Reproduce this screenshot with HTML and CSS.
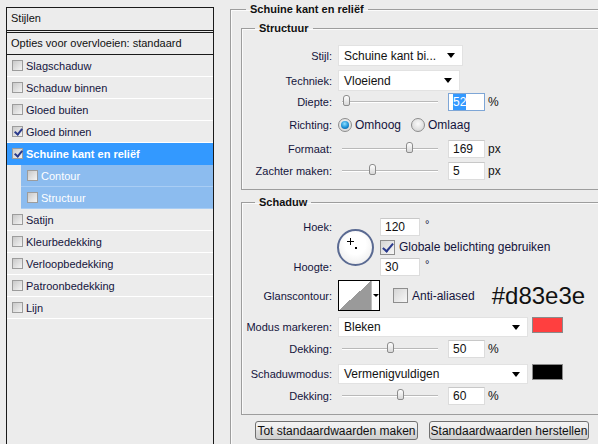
FILE: index.html
```html
<!DOCTYPE html>
<html>
<head>
    <meta charset="utf-8" />
    <title>Laagstijl</title>
    <link rel="stylesheet" href="styles.css">
</head>
<body>
    <div class="dialog">
        <div class="styles-panel">
            <div class="panel-title">Stijlen</div>
            <div class="panel-head">Opties voor overvloeien: standaard</div>
            <ul class="effect-list">
                <li><span class="cb"></span>Slagschaduw</li>
                <li><span class="cb"></span>Schaduw binnen</li>
                <li><span class="cb"></span>Gloed buiten</li>
                <li><span class="cb checked"></span>Gloed binnen</li>
                <li class="selected"><span class="cb checked"></span>Schuine kant en reliëf</li>
                <li class="sub"><span class="cb"></span>Contour</li>
                <li class="sub"><span class="cb"></span>Structuur</li>
                <li><span class="cb"></span>Satijn</li>
                <li><span class="cb"></span>Kleurbedekking</li>
                <li><span class="cb"></span>Verloopbedekking</li>
                <li><span class="cb"></span>Patroonbedekking</li>
                <li><span class="cb"></span>Lijn</li>
            </ul>
        </div>

        <div class="settings">
            <fieldset class="group outer">
                <legend>Schuine kant en reliëf</legend>

                <fieldset class="group structure">
                    <legend>Structuur</legend>
                    <div class="row r-style">
                        <label>Stijl:</label>
                        <div class="select w-style"><span>Schuine kant bi...</span><i class="arrow"></i></div>
                    </div>
                    <div class="row r-tech">
                        <label>Techniek:</label>
                        <div class="select w-tech"><span>Vloeiend</span><i class="arrow"></i></div>
                    </div>
                    <div class="row r-depth">
                        <label>Diepte:</label>
                        <div class="slider"><span class="thumb" style="left: 1px"></span></div>
                        <div class="field focused"><span class="sel">52</span></div>
                        <span class="unit">%</span>
                    </div>
                    <div class="row r-dir">
                        <label>Richting:</label>
                        <span class="radio on"></span><span class="radio-text">Omhoog</span>
                        <span class="radio"></span><span class="radio-text">Omlaag</span>
                    </div>
                    <div class="row r-size">
                        <label>Formaat:</label>
                        <div class="slider"><span class="thumb" style="left: 64px"></span></div>
                        <div class="field">169</div>
                        <span class="unit">px</span>
                    </div>
                    <div class="row r-soft">
                        <label>Zachter maken:</label>
                        <div class="slider"><span class="thumb" style="left: 27px"></span></div>
                        <div class="field">5</div>
                        <span class="unit">px</span>
                    </div>
                </fieldset>

                <fieldset class="group shading">
                    <legend>Schaduw</legend>
                    <div class="angle-block">
                        <div class="angle-labels">
                            <label>Hoek:</label>
                            <label>Hoogte:</label>
                        </div>
                        <div class="dial">
                            <span class="cross"></span>
                            <span class="dot"></span>
                        </div>
                        <div class="angle-fields">
                            <div class="line">
                                <div class="field wide">120</div><span class="deg">°</span>
                            </div>
                            <div class="line">
                                <span class="box checked"></span><span class="box-text">Globale belichting gebruiken</span>
                            </div>
                            <div class="line">
                                <div class="field wide">30</div><span class="deg">°</span>
                            </div>
                        </div>
                    </div>
                    <div class="row r-gloss">
                        <label>Glanscontour:</label>
                        <div class="contour"><span class="curve"></span><span class="drop"><i class="arrow small"></i></span></div>
                        <span class="box aa"></span><span class="box-text">Anti-aliased</span>
                        <span class="hex">#d83e3e</span>
                    </div>
                    <div class="row r-mode">
                        <label>Modus markeren:</label>
                        <div class="select w-mode"><span>Bleken</span><i class="arrow"></i></div>
                        <span class="swatch" style="background: #ff3f3f"></span>
                    </div>
                    <div class="row r-op">
                        <label>Dekking:</label>
                        <div class="slider"><span class="thumb" style="left: 45px"></span></div>
                        <div class="field">50</div>
                        <span class="unit">%</span>
                    </div>
                    <div class="row r-mode2">
                        <label>Schaduwmodus:</label>
                        <div class="select w-mode"><span>Vermenigvuldigen</span><i class="arrow"></i></div>
                        <span class="swatch" style="background: #000000"></span>
                    </div>
                    <div class="row r-op">
                        <label>Dekking:</label>
                        <div class="slider"><span class="thumb" style="left: 55px"></span></div>
                        <div class="field">60</div>
                        <span class="unit">%</span>
                    </div>
                </fieldset>

                <div class="buttons">
                    <button class="btn b-make">Tot standaardwaarden maken</button>
                    <button class="btn b-reset">Standaardwaarden herstellen</button>
                </div>
            </fieldset>
        </div>
    </div>
</body>
</html>
```

FILE: styles.css
```css
html, body {
    margin: 0;
    padding: 0;
    background: #ececec;
}

body {
    font-family: "Liberation Sans", Arial, sans-serif;
    font-size: 11px;
    color: #14143c;
    white-space: nowrap;
}

.dialog {
    display: flex;
    width: 598px;
    height: 444px;
    overflow: hidden;
}

/* left: list of styles */

.styles-panel {
    flex: none;
    width: 206px;
    height: 460px;
    margin: 7px 0 0 6px;
    border: 1px solid #1a1a1a;
    background: #ececec;
}

.panel-title {
    height: 22px;
    line-height: 21px;
    padding-left: 4px;
    border-bottom: 3px double #1a1a1a;
    color: #111;
}

.panel-head {
    height: 21px;
    line-height: 21px;
    padding-left: 4px;
    border-bottom: 1px solid #1a1a1a;
    color: #111;
}

.effect-list {
    list-style: none;
    margin: 0;
    padding: 0;
}

.effect-list li {
    display: flex;
    align-items: center;
    height: 21px;
    padding-left: 5px;
    border-bottom: 1px solid #fff;
}

.effect-list li.selected {
    background: #3399ff;
    color: #fff;
    font-weight: bold;
    border-bottom-color: #3399ff;
}

.effect-list li.sub {
    margin-left: 14px;
    padding-left: 6px;
    background: #8cbcef;
    color: #fff;
    border-bottom-color: #a9cdf4;
}

.cb {
    flex: none;
    width: 9px;
    height: 9px;
    margin-right: 3px;
    border: 1px solid #9c9c9c;
    background: linear-gradient(135deg, #c9c9c9, #f4f4f4);
    position: relative;
}

.cb.checked::after,
.box.checked::after {
    content: "";
    position: absolute;
    left: 3px;
    top: 0px;
    width: 3px;
    height: 6px;
    border: solid #2a3a8c;
    border-width: 0 2px 2px 0;
    transform: rotate(40deg);
}

/* right: settings */

.settings {
    flex: none;
    width: 420px;
    margin-left: 16px;
}

.group {
    margin: 0;
    padding: 0;
    border: 1px solid #9d9d9d;
    box-shadow: inset 1px 1px 0 #fbfbfb;
}

.group legend {
    font-weight: bold;
    color: #111;
    line-height: 14px;
    padding: 0 4px;
}

.outer {
    margin-top: 2px;
    padding: 0 0 0 10px;
    height: 460px;
    border-right: none;
}

.outer > legend {
    margin-left: 5px;
}

.structure {
    margin-top: 5px;
    padding: 0 0 9px 0;
}

.structure > legend,
.shading > legend {
    margin-left: 13px;
}

.shading {
    margin-top: 5px;
    padding: 0 0 9px 0;
}

.row {
    display: flex;
    align-items: center;
}

.row label,
.angle-labels label {
    width: 90px;
    text-align: right;
    flex: none;
}

.row label {
    margin-right: 6px;
}

.r-style { margin-top: 10px; height: 21px; }
.r-tech { margin-top: 4px; height: 21px; }
.r-depth { margin-top: 2px; height: 18px; }
.r-dir { margin-top: 5px; height: 18px; }
.r-size { margin-top: 6px; height: 18px; }
.r-soft { margin-top: 4px; height: 18px; }
.r-gloss { margin-top: 4px; height: 31px; }
.r-mode { margin-top: 6px; height: 20px; }
.r-mode2 { margin-top: 6px; height: 20px; }
.r-op { margin-top: 3px; height: 18px; }

.select {
    display: flex;
    align-items: center;
    justify-content: space-between;
    box-sizing: border-box;
    height: 21px;
    padding: 0 7px 0 5px;
    background: #fff;
    border: 1px solid #e2e2e2;
    font-size: 12px;
    color: #111;
}

.w-style { width: 125px; }
.w-tech { width: 122px; }
.w-mode { width: 190px; height: 20px; }

.arrow {
    width: 0;
    height: 0;
    border-left: 4px solid transparent;
    border-right: 4px solid transparent;
    border-top: 5px solid #000;
}

.arrow.small {
    border-left-width: 3px;
    border-right-width: 3px;
    border-top-width: 3px;
}

.slider {
    flex: none;
    position: relative;
    width: 96px;
    height: 1px;
    margin: 0 10px 0 4px;
    background: #b9b9b9;
    border-bottom: 1px solid #fff;
}

.thumb {
    position: absolute;
    top: -6px;
    width: 7px;
    height: 11px;
    box-sizing: border-box;
    border: 1px solid #8c8c8c;
    border-radius: 3px 3px 2px 2px;
    background: linear-gradient(#ffffff, #d8d8d8);
}

.field {
    flex: none;
    box-sizing: border-box;
    width: 37px;
    height: 18px;
    padding-left: 4px;
    background: #fff;
    border: 1px solid #dcdcdc;
    border-top-color: #c8c8c8;
    font-size: 12px;
    line-height: 16px;
    color: #111;
}

.field.wide {
    width: 40px;
}

.field.focused {
    border-color: #7ea6d6;
}

.field .sel {
    background: #3399ff;
    color: #fff;
    padding: 1px 0;
}

.unit {
    margin-left: 3px;
    font-size: 12px;
    color: #111;
}

.deg {
    margin-left: 5px;
    align-self: flex-start;
    font-size: 11px;
}

.radio {
    flex: none;
    position: relative;
    width: 14px;
    height: 14px;
    box-sizing: border-box;
    border-radius: 50%;
    border: 1px solid #8d8d8d;
    background: radial-gradient(circle at 50% 40%, #fafafa, #cfcfcf);
}

.radio.on::after {
    content: "";
    position: absolute;
    left: 2px;
    top: 2px;
    width: 8px;
    height: 8px;
    border-radius: 50%;
    background: radial-gradient(circle at 45% 35%, #8fe0ff, #1a8fd6 55%, #0b4f8c);
}

.radio-text {
    margin: 0 10px 0 3px;
    font-size: 12px;
}

/* angle dial */

.angle-block {
    display: flex;
    height: 58px;
    margin-top: 9px;
}

.angle-labels {
    display: flex;
    flex-direction: column;
    justify-content: space-between;
    margin-right: 5px;
}

.angle-labels label {
    line-height: 18px;
}

.dial {
    flex: none;
    position: relative;
    width: 37px;
    height: 37px;
    margin-top: 11px;
    box-sizing: border-box;
    border: 2px solid #5a6a92;
    border-radius: 50%;
    background: radial-gradient(circle at 50% 40%, #ffffff 40%, #e6e6e6);
}

.cross {
    position: absolute;
    left: 8px;
    top: 7px;
    width: 7px;
    height: 7px;
    background:
        linear-gradient(#000, #000) 3px 0 / 1px 7px no-repeat,
        linear-gradient(#000, #000) 0 3px / 7px 1px no-repeat;
}

.dot {
    position: absolute;
    left: 16px;
    top: 16px;
    width: 2px;
    height: 2px;
    background: #000;
}

.angle-fields {
    display: flex;
    flex-direction: column;
    justify-content: space-between;
    margin-left: 6px;
}

.angle-fields .line {
    display: flex;
    align-items: center;
    height: 18px;
}

.box {
    flex: none;
    position: relative;
    width: 15px;
    height: 15px;
    box-sizing: border-box;
    border: 1px solid #8e8e8e;
    background: linear-gradient(135deg, #d5d5d5, #f7f7f7);
}

.box.checked::after {
    left: 4px;
    top: 0px;
    width: 4px;
    height: 9px;
}

.box-text {
    flex: none;
    margin-left: 4px;
    font-size: 12px;
}

.contour {
    flex: none;
    display: flex;
    width: 42px;
    height: 31px;
    box-sizing: border-box;
    border: 1px solid #000;
    background: #fff;
}

.curve {
    width: 32px;
    background: linear-gradient(to top left, #9a9a9a 50%, #fff 50%);
}

.drop {
    flex: 1;
    display: flex;
    align-items: center;
    justify-content: center;
    border-left: 1px solid #bdbdbd;
}

.box.aa {
    margin-left: 13px;
    align-self: center;
}

.hex {
    flex: none;
    margin-left: 17px;
    font-size: 24px;
    color: #111;
}

.swatch {
    flex: none;
    width: 31px;
    height: 16px;
    margin-left: 4px;
    align-self: flex-start;
    box-sizing: border-box;
    border: 1px solid #8a8a8a;
}

.buttons {
    display: flex;
    gap: 11px;
    margin: 6px 0 0 14px;
}

.btn {
    height: 19px;
    padding: 0;
    border: 1px solid #707070;
    border-radius: 3px;
    background: linear-gradient(#f4f4f4, #ebebeb 50%, #dddddd 50%, #cfcfcf);
    font-family: "Liberation Sans", Arial, sans-serif;
    font-size: 12px;
    color: #111;
}

.b-make { width: 163px; }
.b-reset { width: 160px; }
```
